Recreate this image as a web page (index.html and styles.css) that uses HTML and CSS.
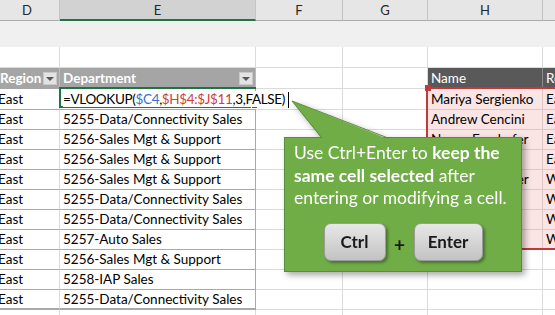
FILE: index.html
```html
<!DOCTYPE html>
<html lang="en">
<head>
  <meta charset="UTF-8">
  <title>Ctrl+Enter</title>
  <link rel="stylesheet" href="styles.css">
</head>
<body>
  <div class="sheet">
    <!-- column letters -->
    <div class="row colhead">
      <div class="c d">D</div>
      <div class="c e sel">E</div>
      <div class="c f">F</div>
      <div class="c g">G</div>
      <div class="c h">H</div>
      <div class="c i"></div>
    </div>

    <div class="band"></div>

    <div class="row blank">
      <div class="c d"></div><div class="c e"></div><div class="c f"></div>
      <div class="c g"></div><div class="c h"></div><div class="c i"></div>
    </div>

    <!-- table headers -->
    <div class="row thead">
      <div class="c d th"><span class="lbl">Region</span><span class="dd"></span></div>
      <div class="c e th"><span class="lbl">Department</span><span class="dd"></span></div>
      <div class="c f"></div>
      <div class="c g"></div>
      <div class="c h dark">Name</div>
      <div class="c i dark">Region</div>
    </div>

    <!-- row being edited -->
    <div class="row edit ref">
      <div class="c d t">East</div>
      <div class="c e t active">
        <span class="handle"></span>
        <span class="formula">=VLOOKUP(<span class="blue">$C4</span>,<span class="red">$H$4:$J$11</span>,3,FALSE)<span class="caret"></span></span>
      </div>
      <div class="c f"></div>
      <div class="c g"></div>
      <div class="c h">Mariya Sergienko</div>
      <div class="c i">East</div>
    </div>

    <div class="row ref">
      <div class="c d t">East</div><div class="c e t">5255-Data/Connectivity Sales</div>
      <div class="c f"></div><div class="c g"></div>
      <div class="c h">Andrew Cencini</div><div class="c i">East</div>
    </div>
    <div class="row ref">
      <div class="c d t">East</div><div class="c e t">5256-Sales Mgt &amp; Support</div>
      <div class="c f"></div><div class="c g"></div>
      <div class="c h">Nancy Freehafer</div><div class="c i">East</div>
    </div>
    <div class="row ref">
      <div class="c d t">East</div><div class="c e t">5256-Sales Mgt &amp; Support</div>
      <div class="c f"></div><div class="c g"></div>
      <div class="c h">Jan Kotas</div><div class="c i">East</div>
    </div>
    <div class="row ref">
      <div class="c d t">East</div><div class="c e t">5256-Sales Mgt &amp; Support</div>
      <div class="c f"></div><div class="c g"></div>
      <div class="c h">Michael Neipper</div><div class="c i">West</div>
    </div>
    <div class="row ref">
      <div class="c d t">East</div><div class="c e t">5255-Data/Connectivity Sales</div>
      <div class="c f"></div><div class="c g"></div>
      <div class="c h">Robert Zare</div><div class="c i">West</div>
    </div>
    <div class="row ref">
      <div class="c d t">East</div><div class="c e t">5255-Data/Connectivity Sales</div>
      <div class="c f"></div><div class="c g"></div>
      <div class="c h">Laura Giussani</div><div class="c i">West</div>
    </div>
    <div class="row ref">
      <div class="c d t">East</div><div class="c e t">5257-Auto Sales</div>
      <div class="c f"></div><div class="c g"></div>
      <div class="c h">Steven Thorpe</div><div class="c i">West</div>
    </div>
    <div class="row">
      <div class="c d t">East</div><div class="c e t">5256-Sales Mgt &amp; Support</div>
      <div class="c f"></div><div class="c g"></div>
      <div class="c h"></div><div class="c i"></div>
    </div>
    <div class="row">
      <div class="c d t">East</div><div class="c e t">5258-IAP Sales</div>
      <div class="c f"></div><div class="c g"></div>
      <div class="c h"></div><div class="c i"></div>
    </div>
    <div class="row">
      <div class="c d t last">East</div><div class="c e t last">5255-Data/Connectivity Sales</div>
      <div class="c f"></div><div class="c g"></div>
      <div class="c h"></div><div class="c i"></div>
    </div>
    <div class="row">
      <div class="c d"></div><div class="c e"></div><div class="c f"></div>
      <div class="c g"></div><div class="c h"></div><div class="c i"></div>
    </div>
  </div>

  <!-- highlighted lookup range -->
  <div class="range"><span class="corner"></span></div>

  <!-- tip callout -->
  <div class="callout">
    <svg class="pointer" width="110" height="40" viewBox="0 0 110 40">
      <polygon points="8,1 38,39 104,39" fill="#70ad47"/>
      <polyline points="38,38 8,1 104,38" fill="none" stroke="#5b8c3b" stroke-width="1"/>
    </svg>
    <p class="tip">
      Use Ctrl+Enter to <b>keep the</b><br>
      <b>same cell selected</b> after<br>
      entering or modifying a cell.
    </p>
    <div class="keys">
      <span class="key ctrl">Ctrl</span>
      <span class="plus">+</span>
      <span class="key enter">Enter</span>
    </div>
  </div>
</body>
</html>
```

FILE: styles.css
```css
body {
  margin: 0;
  width: 555px;
  height: 315px;
  overflow: hidden;
  position: relative;
  background: #fff;
  font-family: Lato, "Liberation Sans", sans-serif;
}
.sheet {
  margin-left: -5px;
}
.row {
  display: flex;
  height: 20px;
}
.c {
  flex: none;
  box-sizing: border-box;
  height: 100%;
  padding: 0 3px;
  border-right: 1px solid #dadada;
  border-bottom: 1px solid #dadada;
  font-size: 13.5px;
  line-height: 19px;
  color: #000;
  white-space: nowrap;
  overflow: hidden;
}
.d { width: 65px; }
.e { width: 196px; }
.f { width: 87px; }
.g { width: 85px; }
.h { width: 115px; }
.i { width: 77px; }

/* column letters */
.colhead {
  height: 21px;
}
.colhead .c {
  background: #e6e6e6;
  border-right-color: #c4c4c4;
  border-bottom-color: #ababab;
  text-align: center;
  font-size: 13px;
  line-height: 20px;
  color: #262626;
}
.colhead .sel {
  background: #d2d2d2;
  border-bottom: 2px solid #217346;
}
.band {
  height: 26px;
  background: #f0f0f0;
}
.blank {
  height: 21px;
}

/* table headers */
.thead {
  height: 21px;
}
.thead .c {
  line-height: 20px;
}
.th {
  display: flex;
  align-items: center;
  justify-content: space-between;
  background: #a5a5a5;
  border-right-color: #bcbcbc;
  border-bottom-color: #a5a5a5;
  color: #fff;
  font-weight: bold;
}
.thead .d {
  padding-left: 5px;
}
.dd {
  position: relative;
  flex: none;
  width: 14px;
  height: 13px;
  margin-right: -1px;
  background: #e3e3e3;
  border: 1px solid #c9c9c9;
  box-sizing: border-box;
}
.dd::after {
  content: "";
  position: absolute;
  left: 2px;
  top: 4px;
  border-left: 4px solid transparent;
  border-right: 4px solid transparent;
  border-top: 4px solid #595959;
}
.dark {
  background: #595959;
  color: #fff;
  border-right-color: #8c8c8c;
  border-bottom-color: #595959;
}

/* left table body */
.t {
  border-bottom-color: #a9a9a9;
}
.e.t {
  border-right-color: #a9a9a9;
}
.t.last {
  border-bottom: 2px solid #a9a9a9;
}

/* row in edit mode */
.edit {
  height: 21px;
}
.edit .c {
  line-height: 20px;
}
.active {
  position: relative;
  overflow: visible;
  z-index: 2;
}
.active::before {
  content: "";
  position: absolute;
  left: -1px;
  top: -2px;
  right: -1px;
  bottom: 1px;
  border: 2px solid #217346;
  border-right: none;
}
.formula {
  position: relative;
  background: #fff;
  padding-right: 2px;
  letter-spacing: -0.35px;
}
.blue { color: #3d6fcf; }
.red { color: #cf3f3b; }
.caret {
  display: inline-block;
  width: 1px;
  height: 16px;
  margin-left: 3px;
  background: #000;
  vertical-align: -4px;
}
.handle {
  position: absolute;
  right: -3px;
  bottom: 0;
  width: 5px;
  height: 5px;
  background: #217346;
  border: 1px solid #fff;
}

/* referenced range */
.ref .h,
.ref .i {
  background: #fae4e4;
  border-color: #dcc6c6;
}
.range {
  position: absolute;
  left: 426px;
  top: 87px;
  width: 140px;
  height: 163px;
  box-sizing: border-box;
  border: 2px solid #c0393b;
  border-right: none;
  z-index: 3;
}
.corner {
  position: absolute;
  left: -3px;
  top: -4px;
  width: 6px;
  height: 6px;
  background: #c0393b;
}

/* callout */
.callout {
  position: absolute;
  left: 284px;
  top: 137px;
  width: 238px;
  height: 135px;
  box-sizing: border-box;
  padding: 4px 9px 0;
  background: #70ad47;
  border: 1px solid #5b8c3b;
  filter: drop-shadow(3px 3px 3px rgba(0,0,0,0.35));
  z-index: 5;
}
.pointer {
  position: absolute;
  left: -1px;
  top: -38px;
}
.tip {
  margin: 0;
  color: #fff;
  font-size: 17.5px;
  line-height: 22.5px;
  white-space: nowrap;
}
.keys {
  display: flex;
  justify-content: center;
  align-items: center;
  margin-top: 13px;
}
.key {
  box-sizing: border-box;
  height: 38px;
  border: 1px solid #9b9b9b;
  border-radius: 7px;
  background: linear-gradient(#e7e7e7, #c3c3c3);
  box-shadow: 2px 2px 3px rgba(0,0,0,0.35);
  font-size: 17px;
  font-weight: bold;
  line-height: 36px;
  text-align: center;
  color: #1a1a1a;
}
.ctrl { width: 62px; }
.enter { width: 69px; }
.plus {
  width: 28px;
  padding-top: 5px;
  text-align: center;
  font-size: 19px;
  font-weight: bold;
  color: #1a1a1a;
}
```
